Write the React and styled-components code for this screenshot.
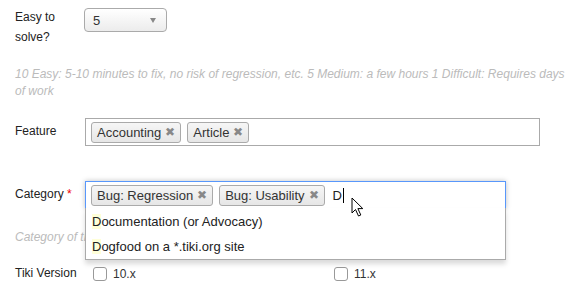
import styled, { createGlobalStyle } from 'styled-components';

const GlobalStyle = createGlobalStyle`
  html, body {
    margin: 0;
    padding: 0;
    background: #fff;
  }
  body {
    font-family: "Liberation Sans", Arial, sans-serif;
    color: #333;
  }
`;

const featureTags = ['Accounting', 'Article'];
const categoryTags = ['Bug: Regression', 'Bug: Usability'];
const results = ['Documentation (or Advocacy)', 'Dogfood on a *.tiki.org site'];

const App = () => {
  return (
    <>
      <GlobalStyle />
      <SyPage>
        <SyRow>
          <SyLabel>Easy to solve?</SyLabel>
          <SySelect>
            <span>5</span>
            <SyArrow />
          </SySelect>
        </SyRow>
        <SyHelp>
          10 Easy: 5-10 minutes to fix, no risk of regression, etc. 5 Medium: a few hours 1 Difficult: Requires days of work
        </SyHelp>

        <SyRow $top={18}>
          <SyLabel $pad={3}>Feature</SyLabel>
          <SyChoices $width={455}>
            {featureTags.map((t) => (
              <SyTag key={t}>
                {t}
                <SyClose>✖</SyClose>
              </SyTag>
            ))}
          </SyChoices>
        </SyRow>

        <SyRow $top={35}>
          <SyLabel $pad={3}>
            Category <SyRequired>*</SyRequired>
          </SyLabel>
          <SyChoices $width={421} $focus>
            {categoryTags.map((t) => (
              <SyTag key={t}>
                {t}
                <SyClose>✖</SyClose>
              </SyTag>
            ))}
            <SyTyped>
              D<SyCaret />
            </SyTyped>
            <SyPointer width="13" height="20" viewBox="0 0 13 20">
              <path
                d="M1 1 L1 16 L4.5 12.5 L7.5 19 L9.8 18 L6.9 11.6 L11.8 11.6 Z"
                fill="#fff"
                stroke="#000"
                strokeWidth="1"
                strokeLinejoin="round"
              />
            </SyPointer>
            <SyDrop>
              {results.map((r) => (
                <SyResult key={r}>
                  <SyMatch>{r[0]}</SyMatch>
                  {r.slice(1)}
                </SyResult>
              ))}
            </SyDrop>
          </SyChoices>
        </SyRow>
        <SyHelp $top={20}>Category of the issue</SyHelp>

        <SyRow $top={17}>
          <SyLabel>Tiki Version</SyLabel>
          <SyChecks>
            <SyCheck>
              <SyBox />
              10.x
            </SyCheck>
            <SyCheck>
              <SyBox />
              11.x
            </SyCheck>
          </SyChecks>
        </SyRow>
      </SyPage>
    </>
  );
};

export default App;

const SyPage = styled.div`
  padding: 7px 11px 0 15px;
  width: 586px;
  height: 296px;
  box-sizing: border-box;
  overflow: hidden;
`;

const SyRow = styled.div`
  display: flex;
  align-items: flex-start;
  margin-top: ${(p) => p.$top || 0}px;
`;

const SyLabel = styled.div`
  width: 70px;
  flex: none;
  font-size: 12px;
  line-height: 20px;
  padding-top: ${(p) => p.$pad || 0}px;
  padding-right: 8px;
  box-sizing: border-box;
  color: #222;
`;

const SyRequired = styled.span`
  color: #e00;
`;

const SySelect = styled.div`
  margin-top: 1px;
  margin-left: -1px;
  width: 83px;
  height: 24px;
  box-sizing: border-box;
  border: 1px solid #aaa;
  border-radius: 4px;
  background: linear-gradient(#ffffff, #ececec);
  display: flex;
  align-items: center;
  justify-content: space-between;
  padding: 0 10px 0 8px;
  font-size: 13px;
  color: #333;
`;

const SyArrow = styled.span`
  width: 0;
  height: 0;
  border-left: 3px solid transparent;
  border-right: 3px solid transparent;
  border-top: 5px solid #888;
`;

const SyHelp = styled.p`
  margin: ${(p) => p.$top || 19}px 0 0;
  font-size: 12px;
  line-height: 17px;
  font-style: italic;
  color: #bbb;
`;

const SyChoices = styled.div`
  position: relative;
  width: ${(p) => p.$width}px;
  height: 28px;
  box-sizing: border-box;
  border: 1px solid ${(p) => (p.$focus ? '#5897fb' : '#aaa')};
  background: #fff;
  display: flex;
  align-items: center;
  gap: 6px;
  padding: 0 5px;
  box-shadow: ${(p) => (p.$focus ? '0 0 5px rgba(0,0,0,0.25)' : 'none')};
`;

const SyTag = styled.span`
  display: inline-flex;
  align-items: center;
  height: 21px;
  box-sizing: border-box;
  padding: 0 5px;
  border: 1px solid #aaa;
  border-radius: 3px;
  background: linear-gradient(#f6f6f6, #e6e6e6);
  font-size: 13px;
  color: #333;
  white-space: nowrap;
`;

const SyClose = styled.span`
  margin-left: 4px;
  font-size: 12px;
  color: #888;
`;

const SyTyped = styled.span`
  display: inline-flex;
  align-items: center;
  margin-left: 2px;
  font-size: 13px;
  color: #222;
`;

const SyCaret = styled.span`
  display: inline-block;
  width: 1px;
  height: 15px;
  margin-left: 1px;
  background: #000;
`;

const SyPointer = styled.svg`
  position: absolute;
  left: 265px;
  top: 15px;
  z-index: 2;
`;

const SyDrop = styled.div`
  position: absolute;
  left: -1px;
  right: -1px;
  top: 100%;
  border: 1px solid #aaa;
  border-top: none;
  background: #fff;
  box-shadow: 0 4px 5px rgba(0, 0, 0, 0.15);
  padding: 1px 0 0;
  z-index: 1;
`;

const SyResult = styled.div`
  height: 25px;
  line-height: 25px;
  padding-left: 6px;
  font-size: 13px;
  color: #222;
`;

const SyMatch = styled.span`
  background: #ffffd8;
`;

const SyChecks = styled.div`
  display: grid;
  grid-template-columns: 241px 241px;
  padding-left: 8px;
  margin-top: 4px;
`;

const SyCheck = styled.label`
  display: flex;
  align-items: center;
  gap: 6px;
  font-size: 12px;
  color: #333;
`;

const SyBox = styled.span`
  width: 12px;
  height: 12px;
  border: 1px solid #999;
  border-radius: 3px;
  background: #fff;
`;
